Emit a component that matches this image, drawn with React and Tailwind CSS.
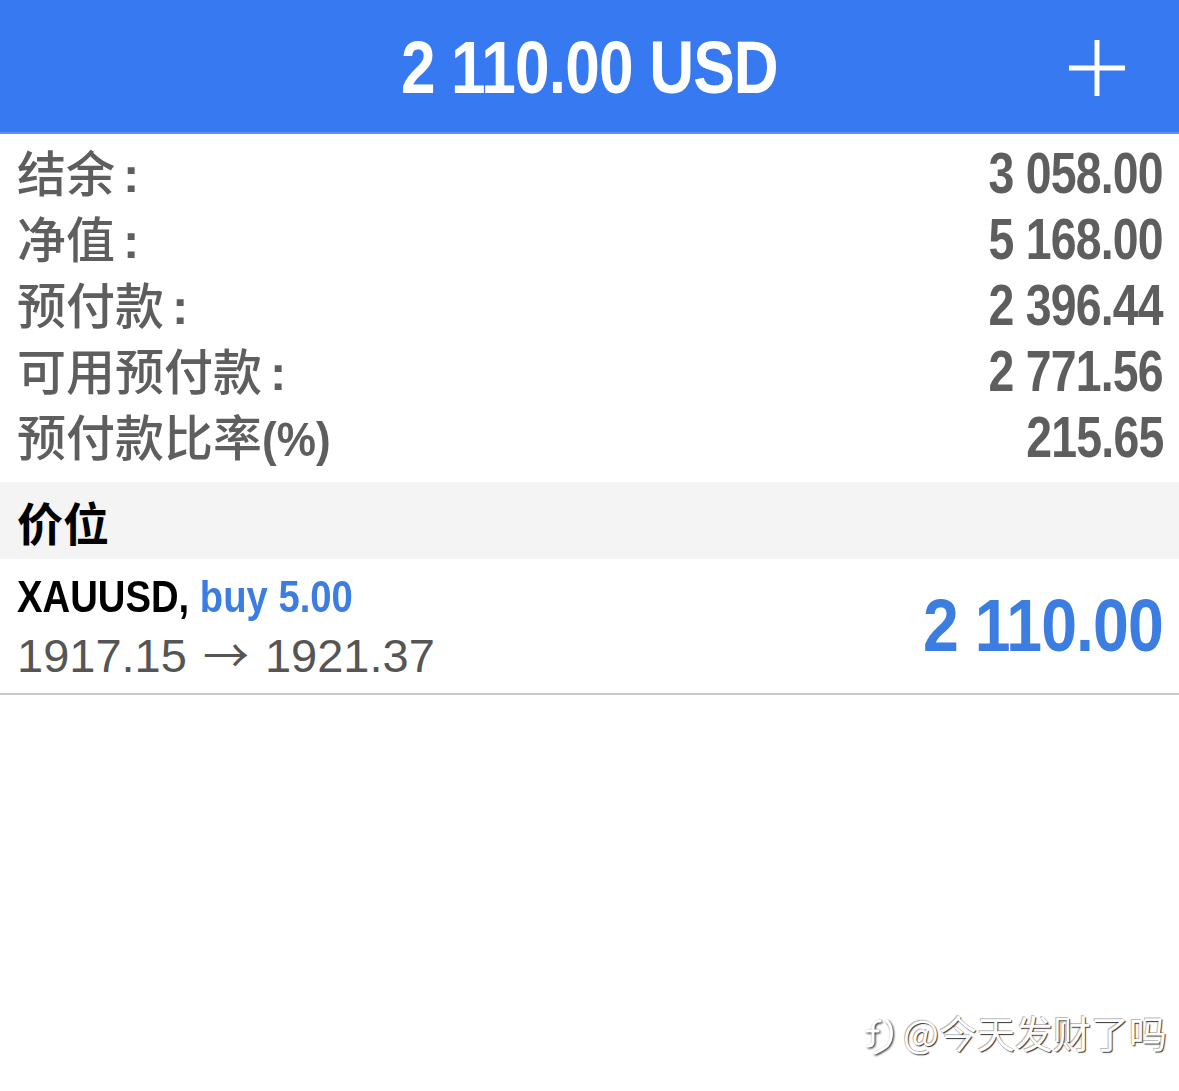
const rows = [
  { label: '结余', value: '3 058.00' },
  { label: '净值', value: '5 168.00' },
  { label: '预付款', value: '2 396.44' },
  { label: '可用预付款', value: '2 771.56' },
  { label: '预付款比率(%)', value: '215.65', noColon: true },
];

const App = () => {
  return (
    <div className="w-[1179px] h-[1091px] bg-white relative overflow-hidden [font-family:'Liberation_Sans','Noto_Sans_CJK_SC',sans-serif]">
      {/* header */}
      <div className="h-[134px] bg-[#3779f0] border-b-2 border-[#5a92f2] flex items-center justify-center relative">
        <h1 className="inline-block scale-x-[0.84] origin-center text-white font-bold text-[74px] leading-none pt-[4px] tracking-[-1px]">
          2 110.00 USD
        </h1>
        <svg className="absolute right-[54px] top-[40px]" width="56" height="56" viewBox="0 0 56 56">
          <path d="M28 0v56M0 28h56" stroke="white" strokeWidth="5" fill="none" />
        </svg>
      </div>

      {/* account summary */}
      <div className="pl-[17px] pr-[16px] pt-[6px] pb-[12px]">
        {rows.map(r => (
          <div key={r.label} className="h-[66px] flex items-center justify-between text-[#5e5e5e]">
            <span className="text-[49px] font-medium leading-none">
              <span className="[font-family:'Noto_Sans_CJK_SC',sans-serif]">{r.label.replace('(%)', '')}</span>
              {r.noColon
                ? <span className="inline-block scale-x-[0.9] origin-left font-bold">(%)</span>
                : <span className="ml-[8px] font-bold">:</span>}
            </span>
            <span className="inline-block scale-x-[0.8] origin-right text-[58px] font-bold leading-none tracking-[-1px]">{r.value}</span>
          </div>
        ))}
      </div>

      {/* section header */}
      <div className="h-[77px] bg-[#f4f4f4] flex items-center pl-[17px]">
        <span className="text-[46px] font-bold text-black leading-none [font-family:'Noto_Sans_CJK_SC',sans-serif]">价位</span>
      </div>

      {/* position */}
      <div className="h-[136px] border-b-2 border-[#cacaca] flex items-center justify-between pl-[17px] pr-[16px]">
        <div className="flex flex-col gap-[10px]">
          <p className="inline-block scale-x-[0.85] origin-left text-[45px] font-bold leading-none whitespace-nowrap">
            <span className="text-black">XAUUSD,</span>{' '}
            <span className="text-[#3b7de0]">buy 5.00</span>
          </p>
          <p className="text-[47px] leading-none text-[#555] whitespace-nowrap">
            1917.15<span className="mx-[16px] [font-family:'Noto_Sans_CJK_SC',sans-serif] text-[46px]">→</span>1921.37
          </p>
        </div>
        <span className="inline-block scale-x-[0.87] origin-right text-[74px] font-bold leading-none text-[#3b7de0] tracking-[-1px]">2 110.00</span>
      </div>

      {/* watermark */}
      <div className="absolute right-[12px] top-[1008px] flex items-center gap-[6px] text-white text-[38px] leading-none [font-family:'Noto_Sans_CJK_SC',sans-serif] [text-shadow:1px_1px_1px_#333,-1px_-1px_0_#bbb]">
        <svg width="34" height="40" viewBox="0 0 34 40" className="mt-[8px] [filter:drop-shadow(1px_1px_1px_#222)]">
          <path d="M17 5c-5 0-7 3-7 7v14c0 3-2 4-5 4" fill="none" stroke="white" strokeWidth="3" strokeLinecap="round" />
          <path d="M4 15h11" fill="none" stroke="white" strokeWidth="3" strokeLinecap="round" />
          <path d="M24 5c6 6 6 18 0 25c-3 3-8 5-12 7" fill="none" stroke="white" strokeWidth="3" strokeLinecap="round" />
        </svg>
        <span>@今天发财了吗</span>
      </div>
    </div>
  );
};

export default App;
